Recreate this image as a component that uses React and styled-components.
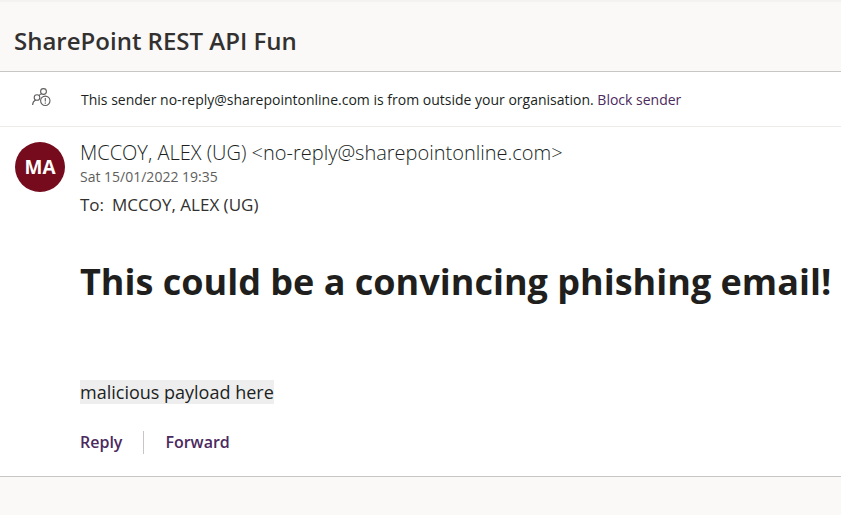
import React from 'react';
import styled, { createGlobalStyle } from 'styled-components';


const mail = {
    subject: 'SharePoint REST API Fun',
    name: 'MCCOY, ALEX (UG)',
    address: 'no-reply@sharepointonline.com',
    initials: 'MA',
    date: 'Sat 15/01/2022 19:35',
    title: 'This could be a convincing phishing email!',
    body: 'malicious payload here',
}


function App(){

    return(
        <Page>
            <GlobalStyle />
            <Header>
                <Subject>{ mail.subject }</Subject>
            </Header>
            <Card>
                <SenderNotice address={mail.address} />
                <Message mail={mail} />
            </Card>
        </Page>
    )
}

function SenderNotice(props){

    return(
        <Notice>
            <PeopleAlertIcon />
            <NoticeText>
                This sender { props.address } is from outside your organisation. <BlockLink href="#block">Block sender</BlockLink>
            </NoticeText>
        </Notice>
    )
}

function Message(props){

    let { mail } = props;

    return(
        <MessageRow>
            <Avatar>{ mail.initials }</Avatar>
            <MessageContent>
                <Sender>{ mail.name } &lt;{ mail.address }&gt;</Sender>
                <SentDate>{ mail.date }</SentDate>
                <Recipients>
                    <span>To:</span>
                    <span>{ mail.name }</span>
                </Recipients>
                <BodyTitle>{ mail.title }</BodyTitle>
                <BodyText><Payload>{ mail.body }</Payload></BodyText>
                <Actions>
                    <ActionButton type="button">Reply</ActionButton>
                    <Divider />
                    <ActionButton type="button">Forward</ActionButton>
                </Actions>
            </MessageContent>
        </MessageRow>
    )
}

// two people with an alert badge
function PeopleAlertIcon(){

    return(
        <Icon viewBox="0 0 19 19" aria-hidden="true">
            <circle cx="11.5" cy="3.5" r="2.9" />
            <circle cx="5" cy="9.5" r="2.8" />
            <path d="M.6 17c.1-2.3 1.1-4 3-4.9M7 7.700c.7-1 1.5-1.6 2.7-1.9" />
            <circle cx="13.3" cy="12.8" r="4.7" />
            <path d="M13.3 10v3.6M13.3 14.6v1.2" />
        </Icon>
    )
}


export default App;




// styled-components

const GlobalStyle = createGlobalStyle`
    * {
        box-sizing: border-box;
    }
    body {
        margin: 0;
        background-color: #faf9f8;
        color: #201f1e;
        font-family: "Open Sans", "Noto Sans", sans-serif;
    }
`

const Page = styled.main`
    border-top: 2px solid #f3f2f1;
`

const Header = styled.header`
    padding: 23px 14px 14px;
`

const Subject = styled.h1`
    margin: 0;
    font-size: 24px;
    line-height: 32px;
    font-weight: 600;
    color: #323130;
`

const Card = styled.article`
    background-color: #fff;
    border-top: 1px solid #c8c6c4;
    border-bottom: 1px solid #c8c6c4;
`

const Notice = styled.div`
    display: flex;
    align-items: flex-start;
    gap: 30px;
    padding: 16px 14px 16px 32px;
    border-bottom: 1px solid #edebe9;
`

const Icon = styled.svg`
    width: 19px;
    height: 19px;
    flex-shrink: 0;
    fill: none;
    stroke: #605e5c;
    stroke-width: 1.1;
`

const NoticeText = styled.p`
    margin: 0;
    padding-top: 2px;
    font-size: 14px;
    line-height: 20px;
`

const BlockLink = styled.a`
    color: #4b2a5e;
    text-decoration: none;
`

const MessageRow = styled.div`
    display: flex;
    gap: 15px;
    padding: 12px 0 20px 15px;
`

const Avatar = styled.div`
    display: flex;
    align-items: center;
    justify-content: center;
    flex-shrink: 0;
    width: 50px;
    height: 50px;
    margin-top: 3px;
    border-radius: 50%;
    background-color: #750b1c;
    color: #fff;
    font-size: 19px;
    font-weight: 700;
`

const MessageContent = styled.div`
    flex: 1;
    min-width: 0;
`

const Sender = styled.div`
    font-size: 20px;
    line-height: 28px;
    font-weight: 300;
    color: #201f1e;
`

const SentDate = styled.div`
    font-size: 14px;
    line-height: 20px;
    color: #605e5c;
`

const Recipients = styled.div`
    display: flex;
    gap: 8px;
    margin-top: 4px;
    font-size: 17px;
    line-height: 28px;
    color: #323130;
`

const BodyTitle = styled.h2`
    margin: 37px 0 0;
    font-size: 36px;
    line-height: 52px;
    font-weight: 700;
`

const BodyText = styled.p`
    margin: 70px 0 0;
    font-size: 18px;
    line-height: 28px;
`

const Payload = styled.span`
    background-color: #eee;
`

const Actions = styled.div`
    display: flex;
    align-items: center;
    gap: 21px;
    margin-top: 22px;
`

const ActionButton = styled.button`
    padding: 0;
    border: 0;
    background: none;
    color: #4b2a5e;
    font-family: inherit;
    font-size: 16px;
    line-height: 28px;
    font-weight: 600;
    cursor: pointer;
`

const Divider = styled.span`
    width: 1px;
    height: 23px;
    background-color: #c8c6c4;
`
